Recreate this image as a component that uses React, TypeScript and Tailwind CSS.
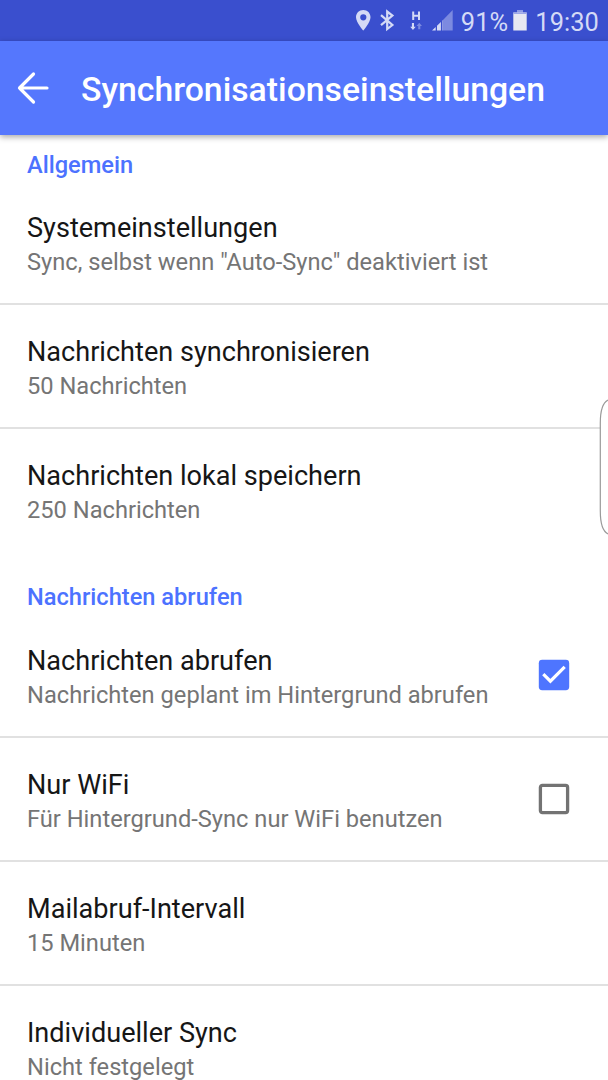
import React from "react";

type RowProps = {
  title: string;
  summary: string;
  checked?: boolean;
  divider?: boolean;
};

function Checkbox({ checked }: { checked: boolean }) {
  return (
    <svg width="32" height="32" viewBox="0 0 32 32" className="shrink-0" role="checkbox" aria-checked={checked}>
      {checked ? (
        <>
          <rect x="0.8" y="0.8" width="30.4" height="30.4" rx="3.4" fill="#4e75ff" />
          <path d="M5.3 15.2L12.4 22.2L26.7 7.9" fill="none" stroke="#fff" strokeWidth="3.2" />
        </>
      ) : (
        <rect x="2.4" y="2.4" width="27.2" height="27.2" rx="2" fill="none" stroke="#737373" strokeWidth="3.3" />
      )}
    </svg>
  );
}

function Row({ title, summary, checked, divider = true }: RowProps) {
  return (
    <div className="flex h-[124px] flex-col">
      <div className="flex flex-1 items-start pr-[38px] pl-[27px]">
        <div className="min-w-0 flex-1 pt-[31px] whitespace-nowrap">
          <div className="text-[27.1px] leading-8 text-[#161616]">{title}</div>
          <div className="text-[23.67px] leading-9 text-[#757575]">{summary}</div>
        </div>
        {checked !== undefined && (
          <div className="pt-[45px]">
            <Checkbox checked={checked} />
          </div>
        )}
      </div>
      {divider && <div className="h-[2px] bg-[#e1e1e1]" />}
    </div>
  );
}

function StatusBar() {
  return (
    <div className="flex h-[41px] items-center justify-end bg-[#3a4fce] pr-[9px] text-[#d4daf6]">
      <svg width="108" height="41" viewBox="350 0 108 41" className="mr-[3px]">
        <path
          fillRule="evenodd"
          d="M363.3 10C359 10 356 13.200 356 17.200C356 22.300 363.300 30.500 363.300 30.500S370.500 22.300 370.500 17.200C370.500 13.200 367.500 10 363.300 10ZM363.300 14.200A3.100 3.100 0 1 1 363.300 20.400A3.100 3.100 0 1 1 363.300 14.200Z"
          fill="currentColor"
        />
        <path d="M381 15.2L392.400 25L387.200 29.100V11.600L392.400 15.600L381 25.200" fill="none" stroke="currentColor" strokeWidth="2.2" />
        <path d="M413.200 11.500V20M419 11.500V20M413.200 15.700H419" fill="none" stroke="currentColor" strokeWidth="2" />
        <path d="M411.900 23H414V26.800H415.700L412.950 30L410.200 26.800H411.900Z" fill="currentColor" />
        <path d="M418.200 29.300H420.300V26H422L419.250 22.800L416.500 26H418.200Z" fill="#7c8ae0" />
        <path d="M442.500 20.500L452.700 10V30.400H442.500Z" fill="#7c8ae0" />
        <path d="M432 30.400L435.700 27V30.400ZM437 25.800L440.900 21.900V30.400H437Z" fill="currentColor" />
        <path d="M442.100 30.400V20.700L442.500 20.300V30.400Z" fill="currentColor" />
      </svg>
      <span className="text-[25.4px] leading-[42px] tracking-[0.1px]">
        <span className="relative top-px">91%</span>
      </span>
      <svg width="14" height="41" viewBox="0 0 14 41" className="ml-[5px]">
        <path d="M4 10H10V13H4Z" fill="#8e9be5" />
        <path d="M0.300 12.500H13.700V30.500H0.300Z" fill="#e7e8f2" />
        <path d="M0.300 12.500H13.700V14H0.300Z" fill="#9ca7e8" />
      </svg>
      <span className="ml-[8px] text-[25.4px] leading-[42px] tracking-[0.1px]">
        <span className="relative top-px">19:30</span>
      </span>
    </div>
  );
}

export default function App() {
  return (
    <div className="relative h-[1080px] w-[608px] overflow-hidden bg-white font-['Roboto','Liberation_Sans',sans-serif]">
      <StatusBar />
      <header className="flex h-[94px] items-center bg-[#5577fd] shadow-[0_2px_6px_rgba(0,0,0,0.35)]">
        <svg width="34" height="34" viewBox="0 0 34 34" className="ml-4 shrink-0" aria-label="Zurück">
          <path d="M17.500 3L3.500 17L17.500 31M3.500 17H31" fill="none" stroke="#fff" strokeWidth="3.2" strokeLinecap="round" strokeLinejoin="round" />
        </svg>
        <h1 className="ml-[31px] pt-[3px] text-[33.78px] leading-10 font-medium whitespace-nowrap text-white">
          Synchronisationseinstellungen
        </h1>
      </header>
      <main>
        <h2 className="h-[46px] pt-[14px] pl-[27px] text-[23.64px] leading-8 font-medium text-[#4c72ff]">Allgemein</h2>
        <Row title="Systemeinstellungen" summary={'Sync, selbst wenn "Auto-Sync" deaktiviert ist'} />
        <Row title="Nachrichten synchronisieren" summary="50 Nachrichten" />
        <Row title="Nachrichten lokal speichern" summary="250 Nachrichten" divider={false} />
        <h2 className="h-[61px] pt-[28px] pl-[27px] text-[23.64px] leading-8 font-medium text-[#4c72ff]">Nachrichten abrufen</h2>
        <Row title="Nachrichten abrufen" summary="Nachrichten geplant im Hintergrund abrufen" checked />
        <Row title="Nur WiFi" summary="Für Hintergrund-Sync nur WiFi benutzen" checked={false} />
        <Row title="Mailabruf-Intervall" summary="15 Minuten" />
        <Row title="Individueller Sync" summary="Nicht festgelegt" />
      </main>
      <svg width="10" height="140" viewBox="0 0 10 140" className="absolute top-[397px] right-0">
        <path d="M10 3C4 6 2.300 14 2.300 26V114C2.300 126 4 134 10 137Z" fill="#fff" />
        <path d="M10 3C4 6 2.300 14 2.300 26V114C2.300 126 4 134 10 137" fill="none" stroke="#999" strokeWidth="1.2" />
      </svg>
    </div>
  );
}
